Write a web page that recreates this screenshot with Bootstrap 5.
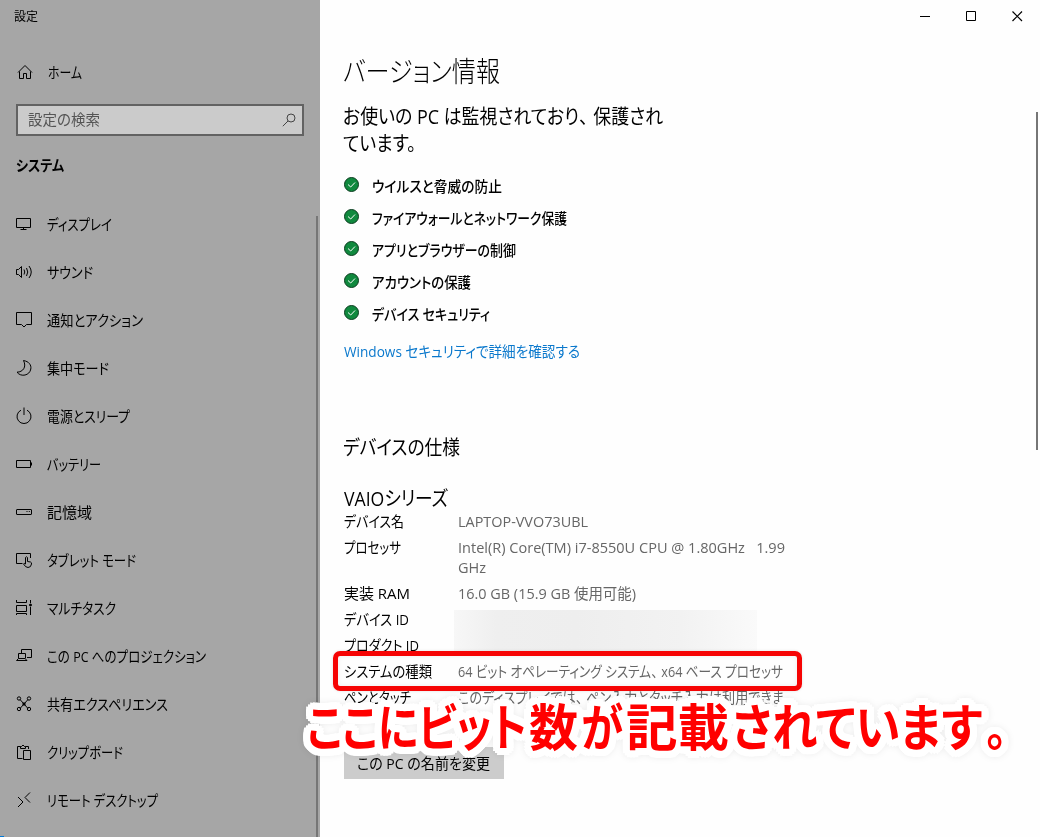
<!DOCTYPE html>
<html lang="ja">
<head>
<meta charset="utf-8">
<title>設定</title>
<link href="https://cdn.jsdelivr.net/npm/bootstrap@5.3.0/dist/css/bootstrap.min.css" rel="stylesheet">
<style>
body{height:837px;overflow:hidden;background:#fefefe;color:#000;font-family:"Open Sans","Noto Sans CJK JP",sans-serif;font-size:15px;line-height:20px;font-feature-settings:"palt"}
.fit{display:inline-block;white-space:pre;transform-origin:0 50%}
.wide{font-feature-settings:normal;letter-spacing:-.2em}
svg{display:block;flex:none;fill:none;stroke:#000;stroke-width:1}
.side{width:320px;background:#a6a6a6}
.side-title{height:32px;padding-left:14px;font-size:12px;line-height:33px}
.home{height:48px;margin-top:16px;padding-left:16px;gap:14px}
.search{height:32px;margin:8px 16px 0;border:2px solid #626262;background:#cbcbcb;color:#555;padding:0 6px 0 10px}
.search svg{stroke:#444}
.search .fit{margin-top:-2px}
.group-name{height:32px;margin-top:13px;padding-left:16px}
.side-list{margin-top:19px}
.side-list li{height:48px;padding-left:16px;gap:13px}
.side-bar{left:316px;top:216px;width:2px;height:621px;background:#767676}
.corner{left:0;top:836px;width:4px;height:1px;background:#0078d7}
.main-pane{padding-left:24px}
.winbtns{height:32px;padding-right:17px;gap:35px}
.main-bar{right:2px;top:112px;width:2px;height:338px;background:#767676}
h1{font-size:28px;line-height:40px;font-weight:300;margin:19px 0 0 -1px}
.lead-in{font-size:20px;line-height:27px;margin:12px 0 0 -1px;font-weight:400}
.checks{margin-top:12px}
.checks li{height:32px;gap:13px;font-weight:500}
.checks svg{margin-top:-2px}
.checks .fit{margin-top:2px}
.sec-link{height:20px;margin-top:12px;color:#0a78cc;text-decoration:none}
h2{font-size:20px;line-height:28px;font-weight:400;margin:73px 0 0 -1px}
h3{font-size:20px;line-height:25px;font-weight:400;margin:24px 0 0}
.specs>div{margin-bottom:6px}
.specs dt{width:114px;font-weight:400}
.specs dd{color:#666;margin:0}
.redact{left:454px;top:610px;width:303px;height:44px;background:linear-gradient(90deg,#f7f7f7,#efefef 14%,#eee 40%,#f2f2f2 75%,#fafafa)}
.frame{left:333px;top:651px;width:469px;height:40px;border:5px solid #f60404;border-radius:7px;box-shadow:0 0 3px rgba(0,0,0,.12),inset 0 0 5px rgba(0,0,0,.07)}
.rename{width:160px;height:32px;margin-top:40px;background:#ccc;padding-left:13px}
.callout-text{left:307px;top:692px;color:#f00;font-size:50px;line-height:70px;font-weight:700;
filter:drop-shadow(3px 0 0 #fff) drop-shadow(-3px 0 0 #fff) drop-shadow(0 3px 0 #fff) drop-shadow(0 -3px 0 #fff) drop-shadow(2px 2px 0 #fff) drop-shadow(-2px -2px 0 #fff) drop-shadow(2px -2px 0 #fff) drop-shadow(-2px 2px 0 #fff) drop-shadow(0 0 3px rgba(0,0,0,.07))}
</style>
</head>
<body>
<div class="d-flex h-100 position-relative">
<aside class="side flex-shrink-0">
  <div class="side-title"><span class="fit" data-w="24">設定</span></div>
  <div class="home d-flex align-items-center">
    <svg width="18" height="18"><path d="M2 9.5 9 2.5l7 7M3.5 8.500V15.500H7.500V10.500H10.500V15.500H14.500V8.500"/></svg>
    <span class="fit" data-w="34">ホーム</span>
  </div>
  <div class="search d-flex align-items-center justify-content-between">
    <span class="fit" data-w="72">設定の検索</span>
    <svg width="14" height="14"><circle cx="9" cy="5" r="4"/><path d="M6 8 .8 13.200"/></svg>
  </div>
  <div class="group-name d-flex align-items-center fw-bold"><span class="fit" data-w="48">システム</span></div>
  <ul class="side-list list-unstyled mb-0">
    <li class="d-flex align-items-center"><svg width="18" height="18"><path d="M.5 3.500H14.500V12.500H.5ZM7.500 12.500V14.500M4.500 14.500H10.500"/></svg><span class="fit" data-w="65">ディスプレイ</span></li>
    <li class="d-flex align-items-center"><svg width="18" height="18"><path d="M.5 6.500H2.500L5.500 3.500V14.500L2.500 11.500H.5ZM8 6.500Q9.500 9 8 11.500M10.500 5Q13 9 10.500 13M13 3Q17.500 9 13 15"/></svg><span class="fit" data-w="46">サウンド</span></li>
    <li class="d-flex align-items-center"><svg width="18" height="18"><path d="M.5 1.500H15.500V13.500H10.500L8 16 5.500 13.500H.5Z"/></svg><span class="fit" data-w="96">通知とアクション</span></li>
    <li class="d-flex align-items-center"><svg width="18" height="18"><path d="M7.500 1.500C13 2.500 15.500 6 14.800 10 13.800 16.500 5 18.500 1 13.200 7 13 10.800 8 7.500 1.500Z"/></svg><span class="fit" data-w="62">集中モード</span></li>
    <li class="d-flex align-items-center"><svg width="18" height="18"><path d="M5 3.200A7 7 0 1 0 11 3.200M8 .5V8"/></svg><span class="fit" data-w="83">電源とスリープ</span></li>
    <li class="d-flex align-items-center"><svg width="18" height="18"><path d="M.5 5.500H14.500V12.500H.5ZM15.500 7.500V10.500"/></svg><span class="fit" data-w="54">バッテリー</span></li>
    <li class="d-flex align-items-center"><svg width="18" height="18"><rect x=".5" y="6.500" width="15" height="5" rx=".5"/><path d="M10.500 8.500h1M12.800 8.500h1"/></svg><span class="fit" data-w="45">記憶域</span></li>
    <li class="d-flex align-items-center"><svg width="18" height="18"><path d="M6.500 12.500H.5V2.500H14.500V7M9.500 13V6.500Q10.500 5 11.500 6.500V10.500L14.500 11Q15.800 11.500 15.500 13 15 16.500 12 16.500 9.500 16.500 7.500 13 8 11.500 9.500 13"/></svg><span class="fit" data-w="89">タブレット モード</span></li>
    <li class="d-flex align-items-center"><svg width="18" height="18"><path d="M.5 1V3.500H10.500V1M.5 6.500H10.500V12.500H.5ZM.5 16V14.500H10.500V16M14.500 1V4M14.500 8V16"/><circle cx="14.500" cy="6" r="1" fill="#000"/></svg><span class="fit" data-w="69">マルチタスク</span></li>
    <li class="d-flex align-items-center"><svg width="18" height="18"><path d="M5.500 6V2.500H15.500V10.500H11M2.500 11.500V6.500H9.500V11.500M.5 13.500 2.500 11.500H9L11 13.500Z"/></svg><span class="fit" data-w="159">この PC へのプロジェクション</span></li>
    <li class="d-flex align-items-center"><svg width="18" height="18"><path d="M4 4.500 12 13.500M12 4.500 4 13.500"/><circle cx="3" cy="3.500" r="1.700"/><circle cx="13" cy="3.500" r="1.700"/><circle cx="3" cy="14" r="1.700"/><circle cx="13" cy="14" r="1.700"/><rect x="7" y="8" width="2" height="2" fill="#000"/></svg><span class="fit" data-w="121">共有エクスペリエンス</span></li>
    <li class="d-flex align-items-center"><svg width="18" height="18"><path d="M6.500 15.500H1.500V3.500H4.500M9.500 3.500H12.500V6M4.500 5.500V3.500H5.500Q7 .5 8.500 3.500H9.500V5.500ZM7.500 7.500H14.500V16.500H7.500Z"/></svg><span class="fit" data-w="76">クリップボード</span></li>
    <li class="d-flex align-items-center"><svg width="18" height="18"><path d="M2 6 7 11 2 16M14 1.500 9 6.500 14 11.500"/></svg><span class="fit" data-w="111">リモート デスクトップ</span></li>
  </ul>
</aside>
<main class="main-pane flex-grow-1">
  <div class="winbtns d-flex align-items-center justify-content-end">
    <svg width="11" height="11"><path d="M0 5.500H10"/></svg>
    <svg width="11" height="11"><path d="M.5 .5H9.500V9.500H.5Z"/></svg>
    <svg width="11" height="11"><path stroke-width="1.200" d="M.5 .5 10 10M10 .5 .5 10"/></svg>
  </div>
  <h1><span class="fit" data-w="157">バージョン情報</span></h1>
  <div class="lead-in">
    <div><span class="fit" data-w="320">お使いの PC は監視されており<span class="wide">、</span>保護され</span></div>
    <div><span class="fit" data-w="73">ています。</span></div>
  </div>
  <ul class="checks list-unstyled mb-0">
    <li class="d-flex align-items-center"><svg width="15" height="15"><circle cx="7.500" cy="7.500" r="7" fill="#10893e" stroke="#0c3d20"/><path stroke="#fff" d="M4 7.500 6.700 10 11 5.500"/></svg><span class="fit" data-w="130">ウイルスと脅威の防止</span></li>
    <li class="d-flex align-items-center"><svg width="15" height="15"><circle cx="7.500" cy="7.500" r="7" fill="#10893e" stroke="#0c3d20"/><path stroke="#fff" d="M4 7.500 6.700 10 11 5.500"/></svg><span class="fit" data-w="195">ファイアウォールとネットワーク保護</span></li>
    <li class="d-flex align-items-center"><svg width="15" height="15"><circle cx="7.500" cy="7.500" r="7" fill="#10893e" stroke="#0c3d20"/><path stroke="#fff" d="M4 7.500 6.700 10 11 5.500"/></svg><span class="fit" data-w="144">アプリとブラウザーの制御</span></li>
    <li class="d-flex align-items-center"><svg width="15" height="15"><circle cx="7.500" cy="7.500" r="7" fill="#10893e" stroke="#0c3d20"/><path stroke="#fff" d="M4 7.500 6.700 10 11 5.500"/></svg><span class="fit" data-w="99">アカウントの保護</span></li>
    <li class="d-flex align-items-center"><svg width="15" height="15"><circle cx="7.500" cy="7.500" r="7" fill="#10893e" stroke="#0c3d20"/><path stroke="#fff" d="M4 7.500 6.700 10 11 5.500"/></svg><span class="fit" data-w="118">デバイス セキュリティ</span></li>
  </ul>
  <a class="sec-link d-block" href="#"><span class="fit" data-w="236">Windows セキュリティで詳細を確認する</span></a>
  <h2><span class="fit" data-w="117">デバイスの仕様</span></h2>
  <h3><span class="fit" data-w="104">VAIOシリーズ</span></h3>
  <dl class="specs mb-0">
    <div class="d-flex"><dt><span class="fit" data-w="60">デバイス名</span></dt><dd><span class="fit" data-w="130">LAPTOP-VVO73UBL</span></dd></div>
    <div class="d-flex"><dt><span class="fit" data-w="57">プロセッサ</span></dt><dd><span class="fit" data-w="327">Intel(R) Core(TM) i7-8550U CPU @ 1.80GHz   1.99</span><br><span class="fit" data-w="28">GHz</span></dd></div>
    <div class="d-flex"><dt><span class="fit" data-w="66">実装 RAM</span></dt><dd><span class="fit" data-w="178">16.0 GB (15.9 GB 使用可能)</span></dd></div>
    <div class="d-flex"><dt><span class="fit" data-w="65">デバイス ID</span></dt></div>
    <div class="d-flex"><dt><span class="fit" data-w="75">プロダクト ID</span></dt></div>
    <div class="d-flex"><dt><span class="fit" data-w="88">システムの種類</span></dt><dd><span class="fit" data-w="325">64 ビット オペレーティング システム<span class="wide">、</span>x64 ベース プロセッサ</span></dd></div>
    <div class="d-flex"><dt><span class="fit" data-w="67">ペンとタッチ</span></dt><dd><span class="fit" data-w="326">このディスプレイでは<span class="wide">、</span>ペン入力とタッチ入力は利用できま</span></dd></div>
  </dl>
  <div class="rename d-flex align-items-center"><span class="fit" data-w="133">この PC の名前を変更</span></div>
</main>
<div class="side-bar position-absolute"></div>
<div class="corner position-absolute"></div>
<div class="main-bar position-absolute"></div>
<div class="redact position-absolute"></div>
<div class="frame position-absolute"></div>
<div class="callout-text position-absolute d-flex"><span class="fit" data-w="220" data-box="222">ここにビット</span><span class="fit" data-w="49" data-box="52">数</span><span class="fit" data-w="42" data-box="45">が</span><span class="fit" data-w="103" data-box="106">記載</span><span class="fit" data-w="250" data-box="254">されています</span><span class="fit" data-w="21" data-box="21">。</span></div>
</div>
<script src="https://cdn.jsdelivr.net/npm/bootstrap@5.3.0/dist/js/bootstrap.bundle.min.js"></script>
<script>
// Condense each label to its UI width
document.querySelectorAll('.fit').forEach(function (el) {
  var natural = el.getBoundingClientRect().width;
  el.style.transform = 'scaleX(' + (el.dataset.w / natural) + ')';
  if (el.dataset.box) el.style.width = el.dataset.box + 'px';
});
</script>
</body>
</html>
